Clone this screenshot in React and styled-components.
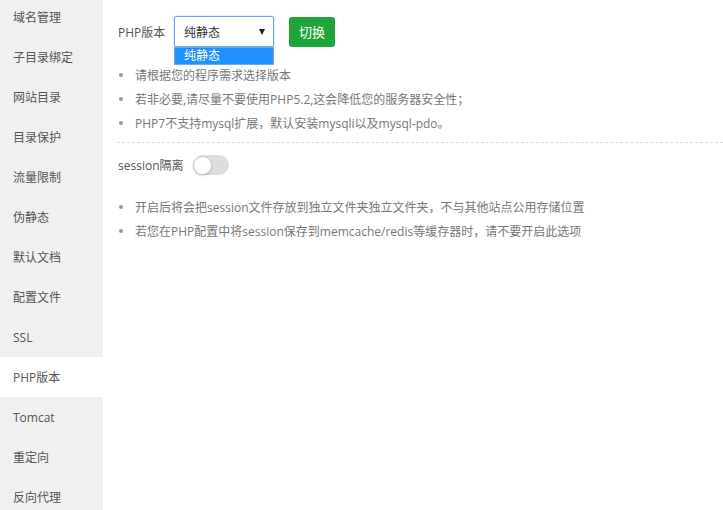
import styled, { createGlobalStyle } from "styled-components";

const GlobalStyle = createGlobalStyle`
    html, body {
        margin: 0;
        padding: 0;
        background: #fff;
    }
    body {
        font-family: "Open Sans", "Noto Sans CJK SC", sans-serif;
        font-size: 12px;
        color: #666;
    }
`;

const Layout = styled.div`
    display: flex;
    height: 510px;
    overflow: hidden;
`;

const Sidebar = styled.ul`
    width: 103px;
    flex-shrink: 0;
    margin: 0;
    padding: 0;
    list-style: none;
    background: #f0f0f0;
    .inner {
        margin-top: -3px;
    }
`;

const NavItem = styled.li`
    height: 40px;
    line-height: 41px;
    padding-left: 13px;
    color: #555;
    font-size: 12px;
    background: ${(p) => (p.$active ? "#fff" : "transparent")};
`;

const Main = styled.div`
    flex: 1;
    padding: 16px 0 0 14px;
`;

const Row = styled.div`
    display: flex;
    align-items: center;
    padding-left: 1px;
    margin-top: ${(p) => p.$top || 0}px;
`;

const Label = styled.span`
    width: ${(p) => p.$width}px;
    color: #555;
    font-size: 12px;
`;

const SelectWrap = styled.div`
    position: relative;
    width: 100px;
    height: 31px;
    box-sizing: border-box;
    border: 1px solid #66a3f0;
    border-radius: 2px;
    box-shadow: 0 0 2px rgba(77, 144, 254, 0.5);
    display: flex;
    align-items: center;
    justify-content: space-between;
    padding: 0 8px 0 9px;
    color: #333;
    font-size: 12px;
`;

const Arrow = styled.span`
    width: 0;
    height: 0;
    border-left: 3.5px solid transparent;
    border-right: 3.5px solid transparent;
    border-top: 6px solid #222;
    margin-top: 1px;
`;

const Options = styled.div`
    position: absolute;
    left: -1px;
    top: 30px;
    width: 100px;
    height: 18px;
    line-height: 16px;
    box-sizing: border-box;
    background: #1e90ff;
    border: 1px solid #7aa7d8;
    color: #fff;
    padding-left: 9px;
    font-size: 12px;
`;

const SwitchButton = styled.button`
    margin-left: 15px;
    width: 46px;
    height: 30px;
    border: none;
    border-radius: 3px;
    background: #20a53a;
    color: #fff;
    font-family: inherit;
    font-size: 13px;
    padding: 0;
`;

const Tips = styled.ul`
    margin: ${(p) => p.$top}px 0 0;
    padding: 0 0 0 2px;
    list-style: none;
`;

const Tip = styled.li`
    display: flex;
    align-items: center;
    height: 24px;
    color: #777;
    font-size: 12px;
    gap: 12px;
`;

const Dot = styled.span`
    width: 4px;
    height: 4px;
    border-radius: 50%;
    background: #999;
`;

const Divider = styled.div`
    margin-top: 7px;
    border-top: 1px dashed #ddd;
`;

const Toggle = styled.span`
    width: 36px;
    height: 20px;
    box-sizing: border-box;
    border-radius: 10px;
    background: #ddd;
    display: flex;
    align-items: center;

    .knob {
        width: 19px;
        height: 19px;
        box-sizing: border-box;
        border-radius: 50%;
        background: #fff;
        border: 1px solid #ccc;
        box-shadow: 0 1px 2px rgba(0, 0, 0, 0.15);
    }
`;

const menu = ["域名管理", "子目录绑定", "网站目录", "目录保护", "流量限制", "伪静态", "默认文档", "配置文件", "SSL", "PHP版本", "Tomcat", "重定向", "反向代理"];

export default function App() {
    return (
        <>
            <GlobalStyle />
            <Layout>
                <Sidebar>
                    <div className="inner">
                        {menu.map((m) => (
                            <NavItem key={m} $active={m === "PHP版本"}>
                                {m}
                            </NavItem>
                        ))}
                    </div>
                </Sidebar>
                <Main>
                    <Row>
                        <Label $width={56}>PHP版本</Label>
                        <SelectWrap>
                            <span>纯静态</span>
                            <Arrow />
                            <Options>纯静态</Options>
                        </SelectWrap>
                        <SwitchButton>切换</SwitchButton>
                    </Row>
                    <Tips $top={16}>
                        <Tip><Dot />请根据您的程序需求选择版本</Tip>
                        <Tip><Dot />若非必要,请尽量不要使用PHP5.2,这会降低您的服务器安全性；</Tip>
                        <Tip><Dot />PHP7不支持mysql扩展，默认安装mysqli以及mysql-pdo。</Tip>
                    </Tips>
                    <Divider />
                    <Row $top={12}>
                        <Label $width={75}>session隔离</Label>
                        <Toggle>
                            <span className="knob" />
                        </Toggle>
                    </Row>
                    <Tips $top={20}>
                        <Tip><Dot />开启后将会把session文件存放到独立文件夹独立文件夹，不与其他站点公用存储位置</Tip>
                        <Tip><Dot />若您在PHP配置中将session保存到memcache/redis等缓存器时，请不要开启此选项</Tip>
                    </Tips>
                </Main>
            </Layout>
        </>
    );
}
